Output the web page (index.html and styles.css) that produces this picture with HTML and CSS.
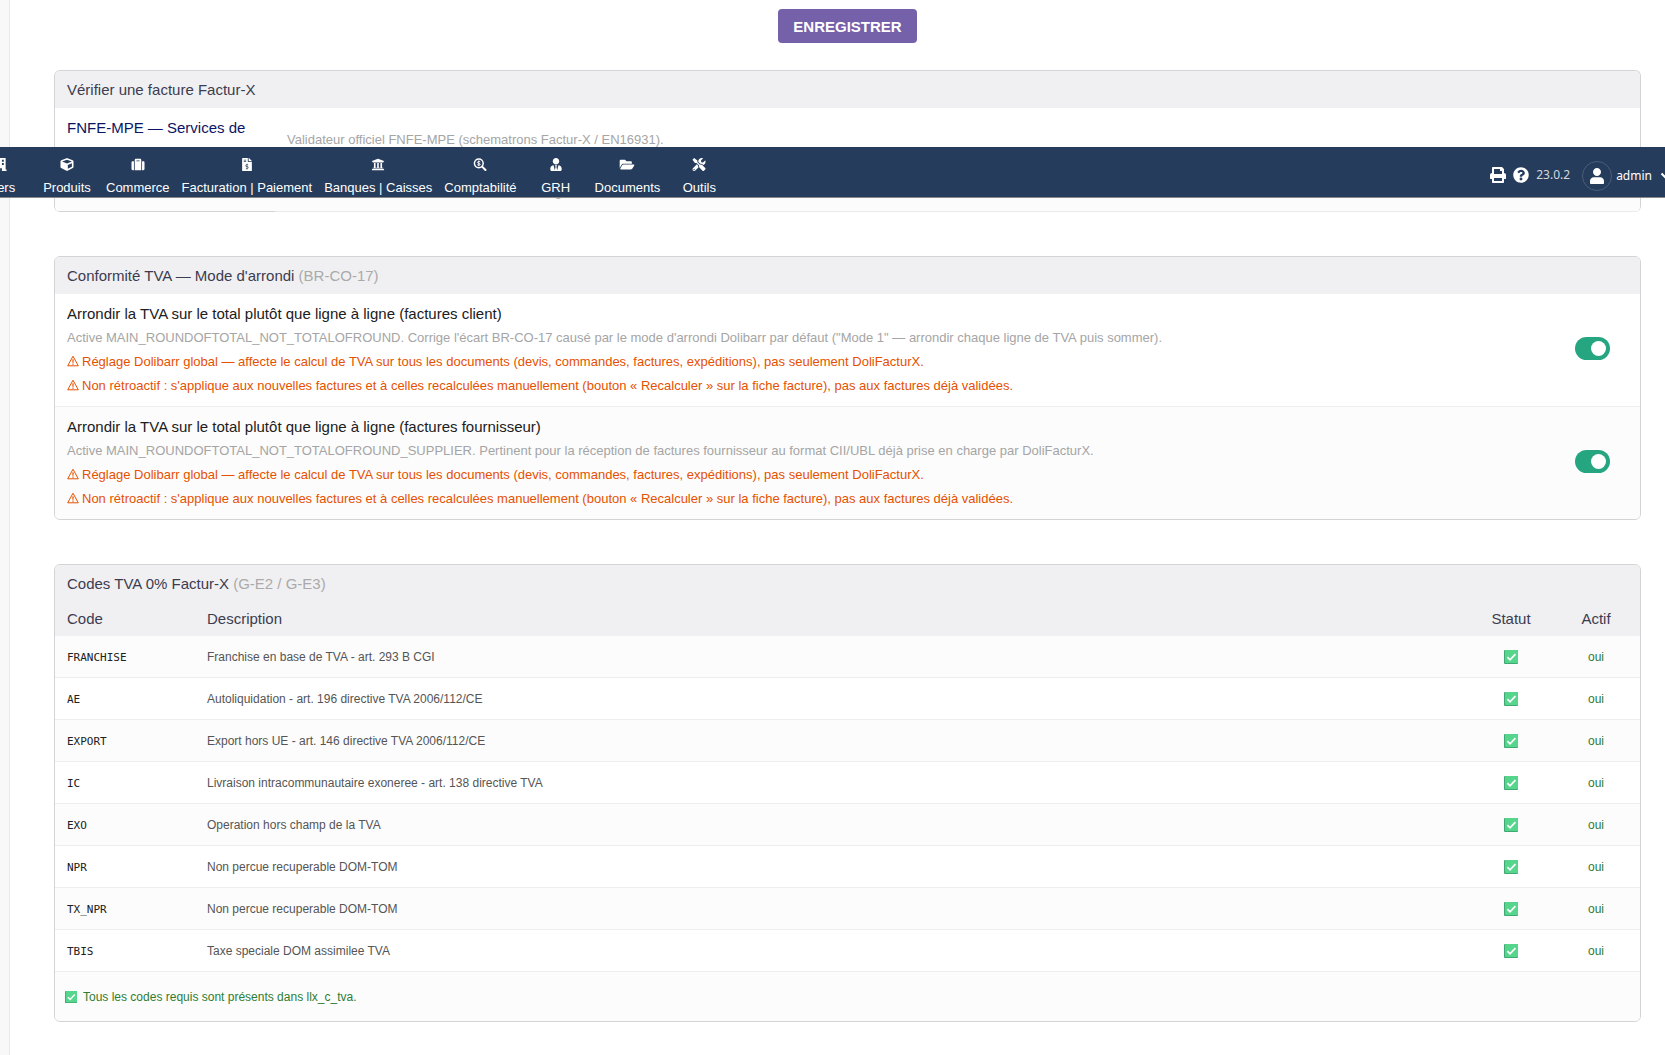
FILE: index.html
```html
<!DOCTYPE html>
<html lang="fr">
<head>
    <meta charset="UTF-8">
    <meta name="viewport" content="width=device-width, initial-scale=1.0">
    <title>DoliFacturX - Configuration</title>
    <link rel="stylesheet" href="styles.css">
</head>
<body>
    <!-- Shared symbols -->
    <svg class="symbols" aria-hidden="true">
        <symbol id="warn" viewBox="0 0 12 12">
            <path d="M6 1.2L11.3 10.8H.7z" fill="none" stroke="currentColor" stroke-width="1" stroke-linejoin="round"/>
            <path d="M6 4.2v3.6M6 8.6v1.2" fill="none" stroke="currentColor" stroke-width="1.2"/>
        </symbol>
        <symbol id="check" viewBox="0 0 14 14">
            <rect width="14" height="14" rx="1" fill="#3fa873"/>
            <rect x="1" width="13" height="13" rx="1" fill="#56d68d"/>
            <path d="M3.4 7.2l2.6 2.6 5.4-5.6" fill="none" stroke="#fff" stroke-width="1.7"/>
        </symbol>
    </svg>

    <header class="topbar">
        <nav class="menu">
            <a href="#" class="menu-item">
                <svg class="icon" viewBox="0 0 14 14"><path fill-rule="evenodd" d="M1 0h11v12.500h1V14H8v-3H6v3H0v-1.500h1zM3 2v2h2V2zm5 0v2h2V2zM3 5.500v2h2v-2zm5 0v2h2v-2z"/></svg>
                <span>Tiers</span>
            </a>
            <a href="#" class="menu-item">
                <svg class="icon" viewBox="0 0 512 512"><path d="M239.1 6.3l-208 78c-18.7 7-31.1 25-31.1 45v225.100c0 18.200 10.300 34.800 26.500 42.900l208 104c13.500 6.800 29.400 6.800 42.900 0l208-104c16.300-8.100 26.500-24.800 26.500-42.900V129.300c0-20-12.400-37.900-31.100-44.900l-208-78C262 2.200 250 2.200 239.100 6.300zM256 68.400l192 72v1.100l-192 78-192-78v-1.100l192-72zm32 356V275.500l160-65v133.900l-160 80z"/></svg>
                <span>Produits</span>
            </a>
            <a href="#" class="menu-item">
                <svg class="icon" viewBox="0 0 512 512"><path d="M128 480h256V80c0-26.500-21.500-48-48-48H176c-26.500 0-48 21.500-48 48v400zm64-384h128v32H192V96zm320 80v256c0 26.500-21.500 48-48 48h-48V128h48c26.500 0 48 21.500 48 48zM96 480H48c-26.500 0-48-21.500-48-48V176c0-26.500 21.500-48 48-48h48v352z"/></svg>
                <span>Commerce</span>
            </a>
            <a href="#" class="menu-item">
                <svg class="icon" viewBox="0 0 384 512"><path d="M377 105L279.100 7c-4.500-4.500-10.600-7-17-7H256v128h128v-6.100c0-6.300-2.500-12.400-7-16.900zm-153 31V0H24C10.700 0 0 10.700 0 24v464c0 13.300 10.700 24 24 24h336c13.300 0 24-10.700 24-24V160H248c-13.200 0-24-10.800-24-24zM64 72c0-4.420 3.580-8 8-8h80c4.420 0 8 3.580 8 8v16c0 4.420-3.580 8-8 8H72c-4.420 0-8-3.580-8-8V72zm0 80v-16c0-4.420 3.580-8 8-8h80c4.420 0 8 3.580 8 8v16c0 4.420-3.580 8-8 8H72c-4.420 0-8-3.580-8-8zm144 263.880V440c0 4.420-3.580 8-8 8h-16c-4.420 0-8-3.580-8-8v-24.290c-11.290-.58-22.270-4.520-31.370-11.350-3.900-2.930-4.100-8.770-.57-12.140l11.750-11.210c2.770-2.640 6.890-2.760 10.130-.73 3.870 2.420 8.260 3.720 12.820 3.720h28.110c6.500 0 11.800-5.920 11.800-13.190 0-5.950-3.610-11.190-8.770-12.730l-45-13.500c-18.590-5.580-31.580-23.420-31.580-43.390 0-24.520 19.050-44.440 42.670-45.070V232c0-4.420 3.580-8 8-8h16c4.420 0 8 3.580 8 8v24.290c11.290.58 22.270 4.510 31.370 11.350 3.900 2.930 4.100 8.770.57 12.140l-11.750 11.210c-2.770 2.640-6.890 2.760-10.130.73-3.870-2.430-8.260-3.720-12.820-3.720h-28.110c-6.500 0-11.800 5.920-11.800 13.190 0 5.950 3.610 11.190 8.770 12.730l45 13.500c18.590 5.580 31.580 23.420 31.580 43.390 0 24.530-19.050 44.440-42.670 45.070z"/></svg>
                <span>Facturation | Paiement</span>
            </a>
            <a href="#" class="menu-item">
                <svg class="icon" viewBox="0 0 512 512"><path d="M496 128v16a8 8 0 0 1-8 8h-24v12c0 6.627-5.373 12-12 12H60c-6.627 0-12-5.373-12-12v-12H24a8 8 0 0 1-8-8v-16a8 8 0 0 1 4.941-7.392l232-88a7.996 7.996 0 0 1 6.118 0l232 88A8 8 0 0 1 496 128zm-24 304H40c-13.255 0-24 10.745-24 24v16a8 8 0 0 0 8 8h464a8 8 0 0 0 8-8v-16c0-13.255-10.745-24-24-24zM96 192v192H60c-6.627 0-12 5.373-12 12v20h416v-20c0-6.627-5.373-12-12-12h-36V192h-64v192h-64V192h-64v192h-64V192H96z"/></svg>
                <span>Banques | Caisses</span>
            </a>
            <a href="#" class="menu-item">
                <svg class="icon" viewBox="0 0 14 14"><circle cx="5.700" cy="5.700" r="4.700" fill="none" stroke="currentColor" stroke-width="1.600"/><path d="M9.300 9.300l3.600 3.600" stroke="currentColor" stroke-width="2.200" stroke-linecap="round"/><path d="M7.300 4.300C6.800 3.500 4.300 3.400 4.300 4.700S7.200 5.600 7.200 6.900 4.700 7.900 4.100 7.100M5.700 2.600v6.200" fill="none" stroke="currentColor" stroke-width="1"/></svg>
                <span>Comptabilité</span>
            </a>
            <a href="#" class="menu-item">
                <svg class="icon" viewBox="0 0 448 512"><path d="M224 256c70.700 0 128-57.300 128-128S294.700 0 224 0 96 57.300 96 128s57.300 128 128 128zm95.800 32.600L272 480l-32-136 32-56h-96l32 56-32 136-47.800-191.400C56.900 292 0 350.300 0 422.400V464c0 26.500 21.500 48 48 48h352c26.500 0 48-21.500 48-48v-41.600c0-72.100-56.900-130.400-128.200-133.800z"/></svg>
                <span>GRH</span>
            </a>
            <a href="#" class="menu-item">
                <svg class="icon icon-wide" viewBox="0 0 576 512"><path d="M572.694 292.093L500.270 416.248A63.997 63.997 0 0 1 444.989 448H45.025c-18.523 0-30.064-20.093-20.731-36.093l72.424-124.155A64 64 0 0 1 152 256h399.964c18.523 0 30.064 20.093 20.730 36.093zM152 224h328v-48c0-26.510-21.490-48-48-48H272l-64-64H48C21.490 64 0 85.490 0 112v278.046l69.077-118.418C86.214 242.250 117.989 224 152 224z"/></svg>
                <span>Documents</span>
            </a>
            <a href="#" class="menu-item">
                <svg class="icon" viewBox="0 0 512 512"><path d="M501.100 395.700L384 278.600c-23.100-23.100-57.600-27.600-85.400-13.900L192 158.100V96L64 0 0 64l96 128h62.100l106.600 106.600c-13.600 27.800-9.200 62.300 13.900 85.400l117.100 117.100c14.600 14.600 38.200 14.600 52.700 0l52.700-52.700c14.500-14.600 14.500-38.200 0-52.700zM331.700 225c28.300 0 54.900 11 74.900 31l19.400 19.400c15.800-6.900 30.800-16.500 43.800-29.500 37.100-37.100 49.700-89.300 37.900-136.700-2.200-9-13.500-12.100-20.100-5.500l-74.400 74.400-67.900-11.300L334 98.900l74.400-74.400c6.600-6.600 3.400-17.900-5.700-20.200-47.400-11.700-99.600.9-136.600 37.900-28.500 28.500-41.900 66.100-41.200 103.600l82.100 82.100c8.100-1.900 16.500-2.900 24.700-2.900zm-103.900 82l-56.700-56.700L18.700 402.800c-25 25-25 65.500 0 90.500s65.500 25 90.500 0l123.600-123.600c-7.600-19.900-9.900-41.600-5-62.700zM64 472c-13.200 0-24-10.800-24-24 0-13.300 10.700-24 24-24s24 10.700 24 24c0 13.200-10.700 24-24 24z"/></svg>
                <span>Outils</span>
            </a>
        </nav>
        <div class="tools">
            <a href="#" class="tool" aria-label="Imprimer">
                <svg viewBox="0 0 512 512"><path d="M448 192V77.250c0-8.490-3.370-16.620-9.370-22.630L393.370 9.370c-6-6-14.140-9.370-22.630-9.370H96C78.330 0 64 14.330 64 32v160c-35.350 0-64 28.650-64 64v112c0 8.840 7.160 16 16 16h48v96c0 17.670 14.330 32 32 32h320c17.670 0 32-14.330 32-32v-96h48c8.840 0 16-7.160 16-16V256c0-35.350-28.650-64-64-64zm-64 256H128v-96h256v96zm0-224H128V64h192v48c0 8.840 7.160 16 16 16h48v96z"/></svg>
            </a>
            <a href="#" class="tool" aria-label="Aide">
                <svg viewBox="0 0 512 512"><path d="M504 256c0 136.997-111.043 248-248 248S8 392.997 8 256C8 119.083 119.043 8 256 8s248 111.083 248 248zM262.655 90c-54.497 0-89.255 22.957-116.549 63.758-3.536 5.286-2.353 12.415 2.715 16.258l34.699 26.310c5.205 3.947 12.621 3.008 16.665-2.122 17.864-22.658 30.113-35.797 57.303-35.797 20.429 0 45.698 13.148 45.698 32.958 0 14.976-12.363 22.667-32.534 33.976C247.128 238.528 216 254.941 216 296v4c0 6.627 5.373 12 12 12h56c6.627 0 12-5.373 12-12v-1.333c0-28.462 83.186-29.647 83.186-106.667 0-58.002-60.165-102-116.531-102zM256 338c-25.365 0-46 20.635-46 46 0 25.364 20.635 46 46 46s46-20.636 46-46c0-25.365-20.635-46-46-46z"/></svg>
            </a>
            <span class="version">23.0.2</span>
            <a href="#" class="user">
                <span class="avatar">
                    <svg viewBox="0 0 448 512"><path d="M224 256c70.700 0 128-57.300 128-128S294.700 0 224 0 96 57.300 96 128s57.300 128 128 128zm100 40H124C50 296 0 350 0 422v58c0 18 14 32 32 32h384c18 0 32-14 32-32v-58c0-72-50-126-124-126z"/></svg>
                </span>
                <span class="login">admin</span>
                <svg class="chevron" viewBox="0 0 12 8"><path d="M1.500 1.500L6 6l4.500-4.500" fill="none" stroke="currentColor" stroke-width="2"/></svg>
            </a>
        </div>
    </header>

    <div class="page">
        <aside class="side"></aside>
        <main class="content">
            <div class="actions">
                <button type="submit" class="btn-save">Enregistrer</button>
            </div>

            <section class="card card-check">
                <h2 class="card-title">Vérifier une facture Factur-X</h2>
                <div class="row">
                    <div class="row-link"><a href="#">FNFE-MPE — Services de tests</a></div>
                    <div class="row-note">Validateur officiel FNFE-MPE (schematrons Factur-X / EN16931).</div>
                </div>
                <div class="row">
                    <div class="row-link"><a href="#">Validateur FeRD</a></div>
                    <div class="row-note">Validateur alternatif Factur-X / ZUGFeRD, en ligne.</div>
                </div>
            </section>

            <section class="card">
                <h2 class="card-title">Conformité TVA — Mode d'arrondi <span class="muted">(BR-CO-17)</span></h2>
                <div class="row">
                    <div class="option">
                        <label for="roundClient">Arrondir la TVA sur le total plutôt que ligne à ligne (factures client)</label>
                        <p class="note">Active MAIN_ROUNDOFTOTAL_NOT_TOTALOFROUND. Corrige l'écart BR-CO-17 causé par le mode d'arrondi Dolibarr par défaut ("Mode 1" — arrondir chaque ligne de TVA puis sommer).</p>
                        <p class="note warning"><svg><use href="#warn"/></svg>Réglage Dolibarr global — affecte le calcul de TVA sur tous les documents (devis, commandes, factures, expéditions), pas seulement DoliFacturX.</p>
                        <p class="note warning"><svg><use href="#warn"/></svg>Non rétroactif : s'applique aux nouvelles factures et à celles recalculées manuellement (bouton « Recalculer » sur la fiche facture), pas aux factures déjà validées.</p>
                    </div>
                    <div class="option-switch"><input type="checkbox" id="roundClient" class="switch" checked></div>
                </div>
                <div class="row">
                    <div class="option">
                        <label for="roundSupplier">Arrondir la TVA sur le total plutôt que ligne à ligne (factures fournisseur)</label>
                        <p class="note">Active MAIN_ROUNDOFTOTAL_NOT_TOTALOFROUND_SUPPLIER. Pertinent pour la réception de factures fournisseur au format CII/UBL déjà prise en charge par DoliFacturX.</p>
                        <p class="note warning"><svg><use href="#warn"/></svg>Réglage Dolibarr global — affecte le calcul de TVA sur tous les documents (devis, commandes, factures, expéditions), pas seulement DoliFacturX.</p>
                        <p class="note warning"><svg><use href="#warn"/></svg>Non rétroactif : s'applique aux nouvelles factures et à celles recalculées manuellement (bouton « Recalculer » sur la fiche facture), pas aux factures déjà validées.</p>
                    </div>
                    <div class="option-switch"><input type="checkbox" id="roundSupplier" class="switch" checked></div>
                </div>
            </section>

            <section class="card">
                <h2 class="card-title">Codes TVA 0% Factur-X <span class="muted">(G-E2 / G-E3)</span></h2>
                <table class="codes">
                    <thead>
                        <tr><th class="col-code">Code</th><th>Description</th><th class="col-status">Statut</th><th class="col-active">Actif</th></tr>
                    </thead>
                    <tbody>
                        <tr><td class="code">FRANCHISE</td><td>Franchise en base de TVA - art. 293 B CGI</td><td class="status"><svg><use href="#check"/></svg></td><td class="active">oui</td></tr>
                        <tr><td class="code">AE</td><td>Autoliquidation - art. 196 directive TVA 2006/112/CE</td><td class="status"><svg><use href="#check"/></svg></td><td class="active">oui</td></tr>
                        <tr><td class="code">EXPORT</td><td>Export hors UE - art. 146 directive TVA 2006/112/CE</td><td class="status"><svg><use href="#check"/></svg></td><td class="active">oui</td></tr>
                        <tr><td class="code">IC</td><td>Livraison intracommunautaire exoneree - art. 138 directive TVA</td><td class="status"><svg><use href="#check"/></svg></td><td class="active">oui</td></tr>
                        <tr><td class="code">EXO</td><td>Operation hors champ de la TVA</td><td class="status"><svg><use href="#check"/></svg></td><td class="active">oui</td></tr>
                        <tr><td class="code">NPR</td><td>Non percue recuperable DOM-TOM</td><td class="status"><svg><use href="#check"/></svg></td><td class="active">oui</td></tr>
                        <tr><td class="code">TX_NPR</td><td>Non percue recuperable DOM-TOM</td><td class="status"><svg><use href="#check"/></svg></td><td class="active">oui</td></tr>
                        <tr><td class="code">TBIS</td><td>Taxe speciale DOM assimilee TVA</td><td class="status"><svg><use href="#check"/></svg></td><td class="active">oui</td></tr>
                    </tbody>
                </table>
                <p class="summary"><svg><use href="#check"/></svg>Tous les codes requis sont présents dans llx_c_tva.</p>
            </section>
        </main>
    </div>
</body>
</html>
```

FILE: styles.css
```css
body {
    margin: 0;
    font-family: "Liberation Sans", Arial, sans-serif;
    font-size: 15px;
    line-height: 24px;
    color: #202020;
    background: #fff;
    overflow-x: hidden;
}

h2, p {
    margin: 0;
}

a {
    color: #0a1464;
    text-decoration: none;
}

.symbols {
    position: absolute;
    width: 0;
    height: 0;
}

/* Top menu, floats over the page */
.topbar {
    position: absolute;
    top: 147px;
    left: 0;
    right: 0;
    z-index: 10;
    display: flex;
    justify-content: space-between;
    height: 50px;
    overflow: hidden;
    background: #263c5c;
    border-bottom: 1px solid #888;
}

.topbar a {
    color: #fff;
}

.menu {
    display: flex;
    margin-left: -32px;
}

.menu-item {
    box-sizing: border-box;
    min-width: 66px;
    padding: 11px 6px 0;
    display: flex;
    flex-direction: column;
    align-items: center;
    gap: 8px;
    font-size: 13px;
    line-height: 18px;
    white-space: nowrap;
}

.topbar svg {
    fill: currentColor;
}

.icon {
    width: 14px;
    height: 14px;
}

.icon-wide {
    width: 16px;
}

.tools {
    display: flex;
    align-items: center;
    gap: 7px;
    padding-top: 6px;
    margin-right: -7px;
}

.tool svg {
    display: block;
    width: 16px;
    height: 16px;
}

.version {
    font-family: "Noto Sans", sans-serif;
    font-size: 12px;
    color: #d4d8de;
}

.user {
    display: flex;
    align-items: center;
    gap: 4px;
    margin-left: 5px;
    padding-top: 2px;
    font-family: "Noto Sans", sans-serif;
    font-size: 12px;
}

.avatar {
    box-sizing: border-box;
    display: flex;
    align-items: center;
    justify-content: center;
    width: 30px;
    height: 30px;
    border: 1px solid #4b5d79;
    border-radius: 50%;
}

.avatar svg {
    width: 14px;
    height: 16px;
}

.chevron {
    width: 12px;
    height: 8px;
    margin-left: 4px;
}

/* Page */
.page {
    display: flex;
    min-height: 100vh;
}

.side {
    flex: 0 0 9px;
    background: #f8f8f8;
    border-right: 1px solid #e8e8e8;
}

.content {
    flex: 1;
    min-width: 0;
    padding: 9px 24px 32px 44px;
}

.actions {
    display: flex;
    justify-content: center;
    margin-bottom: 27px;
}

.btn-save {
    height: 34px;
    padding: 0 15px;
    font-family: inherit;
    font-size: 15px;
    font-weight: bold;
    text-transform: uppercase;
    color: #fff;
    background: #7560aa;
    border: none;
    border-radius: 4px;
    cursor: pointer;
}

.card {
    margin-bottom: 44px;
    border: 1px solid #d4d4d6;
    border-radius: 6px;
    overflow: hidden;
}

.card:last-child {
    margin-bottom: 0;
}

.card-title {
    padding: 7px 12px 6px;
    font-size: 15px;
    font-weight: normal;
    color: #3c3c50;
    background: #f0f0f2;
}

.muted {
    color: #aaa;
}

.row {
    display: flex;
    align-items: center;
    padding: 8px 0;
    border-bottom: 1px solid #eee;
}

.row:last-child {
    background: #fcfcfc;
    border-bottom: none;
}

.row-link {
    box-sizing: border-box;
    width: 220px;
    padding: 0 12px;
}

.row-note {
    flex: 1;
    padding: 0 12px;
    font-size: 13px;
    color: #a5a5a5;
}

/* The cells of the last row close this card */
.card-check {
    border-bottom: none;
}

.card-check .row:last-child {
    padding: 0;
}

.card-check .row:last-child .row-link,
.card-check .row:last-child .row-note {
    padding: 7px 12px;
    border-bottom: 1px solid #eaeaea;
}

.card-check .row:last-child .row-link {
    border-bottom-color: #d4d4d6;
}

.option {
    flex: 1;
    padding: 0 12px;
}

.option label {
    display: block;
}

.note {
    font-size: 13px;
    color: #a5a5a5;
}

.warning {
    color: #e65100;
}

.warning svg {
    width: 12px;
    height: 12px;
    margin-right: 3px;
    vertical-align: -1px;
}

.option-switch {
    display: flex;
    justify-content: center;
    width: 96px;
    padding-bottom: 4px;
}

.switch {
    appearance: none;
    display: flex;
    align-items: center;
    justify-content: flex-end;
    box-sizing: border-box;
    width: 35px;
    height: 23px;
    margin: 0;
    padding: 0 4px;
    background: #25a580;
    border-radius: 12px;
    cursor: pointer;
}

.switch::before {
    content: "";
    width: 15px;
    height: 15px;
    background: #fff;
    border-radius: 50%;
}

.switch:not(:checked) {
    justify-content: flex-start;
    background: #999;
}

/* VAT codes */
.codes {
    width: 100%;
    border-collapse: collapse;
    table-layout: fixed;
}

.codes th {
    height: 34px;
    padding: 0 12px;
    font-weight: normal;
    text-align: left;
    color: #3c3c50;
    background: #f0f0f2;
}

.codes td {
    height: 41px;
    padding: 0 12px;
    font-size: 12px;
    color: #555;
    border-bottom: 1px solid #eee;
}

.codes tbody tr:nth-child(odd) {
    background: #fcfcfc;
}

.codes .col-code {
    width: 116px;
}

.codes .col-status {
    width: 58px;
    text-align: center;
}

.codes .col-active {
    width: 64px;
    text-align: center;
}

.codes .code {
    height: 39px;
    padding-top: 2px;
    font-family: "DejaVu Sans Mono", monospace;
    font-size: 11px;
    color: #202020;
}

.codes .status {
    text-align: center;
}

.codes .status svg {
    display: block;
    width: 14px;
    height: 14px;
    margin: 0 auto;
}

.codes .active {
    text-align: center;
    color: #2e7d32;
}

.summary {
    display: flex;
    align-items: center;
    gap: 6px;
    padding: 13px 10px 12px;
    font-size: 12px;
    color: #2e7d32;
    background: #fcfcfc;
}

.summary svg {
    width: 12px;
    height: 12px;
}
```
